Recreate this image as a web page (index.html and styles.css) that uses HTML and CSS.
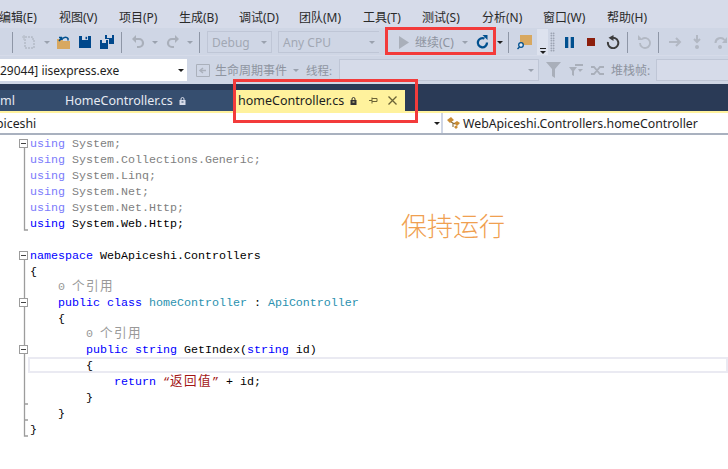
FILE: index.html
```html
<!DOCTYPE html>
<html lang="zh">
<head>
<meta charset="utf-8">
<title>homeController.cs</title>
<link rel="stylesheet" href="styles.css">
</head>
<body>
<div class="ide">
  <nav class="menubar">
    <span class="menu">编辑(E)</span><span class="menu">视图(V)</span><span class="menu">项目(P)</span><span class="menu">生成(B)</span><span class="menu">调试(D)</span><span class="menu">团队(M)</span><span class="menu m-tools">工具(T)</span><span class="menu">测试(S)</span><span class="menu">分析(N)</span><span class="menu m-win">窗口(W)</span><span class="menu">帮助(H)</span>
  </nav>

  <div class="toolbar tb1">
    <svg class="ic back" viewBox="0 0 14 14"><path d="M-6 7a5 5 0 1 0 10 0a5 5 0 1 0-10 0" fill="none" stroke="#aab0bb" stroke-width="3"/></svg>
    <i class="sep s1"></i>
    <svg class="ic newp" viewBox="0 0 15 16"><path d="M3 3h7v2h2v9H3z" fill="none" stroke="#b4bac6" stroke-width="1.5" stroke-dasharray="2 1"/><path d="M2 1v5M0 3h4" stroke="#bcc2ce" stroke-width="1.5"/></svg>
    <i class="dd gray d-new"></i>
    <svg class="ic open" viewBox="0 0 15 15"><path d="M1 4h5l1 2h7v8H1z" fill="#d8a860"/><path d="M3 6l3-3.5M6 2.500H3M6 2.500V5" stroke="#00508f" stroke-width="1.7" fill="none"/><path d="M7 3.500a3 3 0 0 1 5 0v2" stroke="#00508f" stroke-width="1.5" fill="none"/></svg>
    <svg class="ic save" viewBox="0 0 12 12"><path d="M0 0h12v12H0z" fill="#00488c"/><path d="M3 0h6v4H3z" fill="#cfd6e5"/><path d="M6.500 .8h1.600v2.400H6.500z" fill="#00488c"/></svg>
    <svg class="ic saveall" viewBox="0 0 14 14"><path d="M0 5h8v9H0z" fill="#00488c"/><path d="M2 5h4v3H2z" fill="#cfd6e5"/><path d="M5 0h9v9H9V4H5z" fill="#00488c"/><path d="M7 0h5v3H7z" fill="#cfd6e5"/></svg>
    <i class="sep s2"></i>
    <svg class="ic undo" viewBox="0 0 14 14"><path d="M2 4h6a4 4 0 0 1 0 8H6" fill="none" stroke="#a9afba" stroke-width="2.200"/><path d="M1 4l4-4v8z" fill="#a9afba"/></svg>
    <i class="dd gray d-undo"></i>
    <svg class="ic redo" viewBox="0 0 14 14"><path d="M12 4H6a4 4 0 0 0 0 8h2" fill="none" stroke="#a9afba" stroke-width="2.200"/><path d="M13 4L9 0v8z" fill="#a9afba"/></svg>
    <i class="dd gray d-redo"></i>
    <i class="sep s3"></i>
    <div class="combo debug">Debug<i class="dd gray"></i></div>
    <div class="combo cpu">Any CPU<i class="dd gray"></i></div>
    <svg class="ic play" viewBox="0 0 10 13"><path d="M0 0l10 6.500L0 13z" fill="#a9afba"/></svg>
    <span class="cont">继续(C)</span>
    <i class="dd gray d-cont"></i>
    <svg class="ic refresh" viewBox="0 0 13 14"><path d="M8.500 3.600A4.600 4.600 0 1 0 11 7.500" fill="none" stroke="#00508f" stroke-width="2.300"/><path d="M6.500 0l5 0v5z" fill="#00508f"/></svg>
    <i class="dd d-ref"></i>
    <i class="sep s4"></i>
    <svg class="ic find" viewBox="0 0 16 16"><path d="M3 1h12v10H3z" fill="#d8a860"/><circle cx="4" cy="11" r="2.300" fill="#e6ecf5" stroke="#00508f" stroke-width="1.300"/><path d="M2.500 13L.5 15" stroke="#00508f" stroke-width="1.500"/></svg>
    <div class="overflow"><i class="bar"></i><i class="dd"></i></div>
    <i class="grip"></i>
    <svg class="ic pause" viewBox="0 0 9 11"><path d="M0 0h3.300v11H0zM5.700 0H9v11H5.700z" fill="#00508f"/></svg>
    <i class="stop"></i>
    <svg class="ic restart" viewBox="0 0 14 14"><path d="M4.500 3.500A5.200 5.200 0 1 1 2 7" fill="none" stroke="#3c3c3c" stroke-width="2"/><path d="M7.500 0v6L2.500 2.700z" fill="#3c3c3c"/></svg>
    <i class="sep s5"></i>
    <svg class="ic step0" viewBox="0 0 14 14"><path d="M5 4a5 5 0 1 1-2 4" fill="none" stroke="#b2b8c3" stroke-width="1.800"/><path d="M1 0v5h5z" fill="#b2b8c3"/></svg>
    <i class="sep s6"></i>
    <svg class="ic step1" viewBox="0 0 13 10"><path d="M0 5h10M7 1l4 4-4 4" fill="none" stroke="#b2b8c3" stroke-width="2"/></svg>
    <svg class="ic step2" viewBox="0 0 8 14"><path d="M4 0v7M1 4l3 3 3-3" fill="none" stroke="#b2b8c3" stroke-width="2"/><circle cx="4" cy="12" r="2" fill="#b2b8c3"/></svg>
    <svg class="ic step3" viewBox="0 0 14 14"><path d="M1.500 8a5 5 0 0 1 9-3" fill="none" stroke="#b2b8c3" stroke-width="2"/><path d="M13 2v6H8z" fill="#b2b8c3"/><circle cx="6" cy="12" r="2" fill="#b2b8c3"/></svg>
  </div>

  <div class="toolbar tb2">
    <div class="process"><span>29044] iisexpress.exe</span><i class="dd"></i></div>
    <svg class="ic life" viewBox="0 0 14 13"><path d="M.5.500h13v12H.5z" fill="none" stroke="#aab0bb"/><path d="M7 4L4 6.500 7 9M4 6.500h6" fill="none" stroke="#aab0bb" stroke-width="1.500"/></svg>
    <span class="dim t-life">生命周期事件</span>
    <i class="dd gray d-life"></i>
    <span class="dim t-thread">线程:</span>
    <div class="combo thread"><i class="dd gray"></i></div>
    <svg class="ic fun1" viewBox="0 0 15 16"><path d="M0 0h15L9 7v9l-3-2V7z" fill="#a9afba"/></svg>
    <svg class="ic fun2" viewBox="0 0 14 13"><path d="M0 3h8L5 7v5L3 11V7zM6 0h8v2H6z" fill="#a9afba"/><path d="M9 5l5 0-3 3z" fill="#a9afba"/></svg>
    <svg class="ic swap" viewBox="0 0 14 11"><path d="M0 2h3l6 7h4M0 9h3l6-7h4" fill="none" stroke="#a9afba" stroke-width="1.800"/></svg>
    <span class="dim t-stack">堆栈帧:</span>
    <div class="combo stack"></div>
  </div>

  <div class="tabwell">
    <div class="tabs">
      <div class="tab-group">
        <span class="tab-ml">ml</span>
        <span class="tab-home">HomeController.cs</span>
        <svg class="ic lock" viewBox="0 0 7 8"><path d="M2 3V2a1.500 1.500 0 0 1 3 0v1" fill="none" stroke="#d6dbe9"/><path d="M.5 3h6v5h-6z" fill="#d6dbe9"/><path d="M2.500 5h2" stroke="#364e6f"/></svg>
      </div>
      <div class="tab-active">
        <span class="tab-name">homeController.cs</span>
        <svg class="ic lock dark" viewBox="0 0 7 8"><path d="M2 3V2a1.500 1.500 0 0 1 3 0v1" fill="none" stroke="#333"/><path d="M.5 3h6v5h-6z" fill="#333"/><path d="M2.500 5h2" stroke="#fff29d"/></svg>
        <svg class="ic pin" viewBox="0 0 9 9"><path d="M0 4.500h3M3 1.500v6M3 2.500h5v3H3" fill="none" stroke="#6b6336"/></svg>
        <svg class="ic close" viewBox="0 0 9 9"><path d="M.5.500l8 8M8.500.500l-8 8" stroke="#6b6336" stroke-width="1.300"/></svg>
      </div>
    </div>
    <div class="tabline"></div>
  </div>

  <div class="navbar">
    <div class="nav-left"><span class="nav-proj">piceshi</span><i class="dd"></i></div>
    <div class="nav-right">
      <svg class="ic classic" viewBox="0 0 14 14"><path d="M0 4l4-3 3 3-4 3zM7 7l3-2 3 2-3 3zM7 11l2-1.500 2 1.500-2 2z" fill="#c98b32"/><path d="M4 6l4 2M6 7v4" stroke="#7a5a20"/></svg>
      <span>WebApiceshi.Controllers.homeController</span>
    </div>
  </div>

  <div class="editor">
    <svg class="gutter" viewBox="0 0 28 310">
      <path d="M24.500 12v83h3.500M24.500 125v176h3.500M24.500 269h3.500M24.500 285h3.500" fill="none" stroke="#9c9c9c" stroke-width="1.300"/>
      <g fill="#fff" stroke="#9c9c9c">
        <rect x="19.500" y="4.500" width="8" height="8"/>
        <rect x="19.500" y="116.500" width="8" height="8"/>
        <rect x="19.500" y="163.500" width="8" height="8"/>
        <rect x="19.500" y="210.500" width="8" height="8"/>
      </g>
      <path d="M21 8.500h5M21 120.500h5M21 167.500h5M21 214.500h5" stroke="#444"/>
    </svg>
    <div class="code">
      <div class="ln faded"><span class="kw">using</span> System;</div>
      <div class="ln faded"><span class="kw">using</span> System.Collections.Generic;</div>
      <div class="ln faded"><span class="kw">using</span> System.Linq;</div>
      <div class="ln faded"><span class="kw">using</span> System.Net;</div>
      <div class="ln faded"><span class="kw">using</span> System.Net.Http;</div>
      <div class="ln"><span class="kw">using</span> System.Web.Http;</div>
      <div class="ln"> </div>
      <div class="ln"><span class="kw">namespace</span> WebApiceshi.Controllers</div>
      <div class="ln">{</div>
      <div class="ln lens">    0 <span class="zh">个引用</span></div>
      <div class="ln">    <span class="kw">public</span> <span class="kw">class</span> <span class="ty">homeController</span> : <span class="ty">ApiController</span></div>
      <div class="ln">    {</div>
      <div class="ln lens">        0 <span class="zh">个引用</span></div>
      <div class="ln">        <span class="kw">public</span> <span class="kw">string</span> GetIndex(<span class="kw">string</span> id)</div>
      <div class="ln current">        {</div>
      <div class="ln">            <span class="kw">return</span> <span class="str">“<span class="zh">返回值</span>”</span> + id;</div>
      <div class="ln">        }</div>
      <div class="ln">    }</div>
      <div class="ln">}</div>
    </div>
  </div>
</div>

<div class="mark mark-run"></div>
<div class="mark mark-tab"></div>
<div class="note">保持运行</div>
</body>
</html>
```

FILE: styles.css
```css
html, body { margin: 0; padding: 0; height: 100%; background: #fff; overflow: hidden; }
body { position: relative; font-family: "Noto Sans", "Noto Sans CJK SC", sans-serif; font-size: 12px; color: #1e1e1e; }
i { display: block; flex: none; }
.ide { display: flex; flex-direction: column; width: 728px; height: 469px; overflow: hidden; }

.menubar { height: 28px; flex: none; display: flex; align-items: center; background: #d6dbe9; margin-left: -11px; padding-right: 11px; padding-top: 5px; box-sizing: border-box; white-space: nowrap; font-size: 12px; color: #2a2a2a; }
.menu { width: 60px; flex: none; padding-left: 10px; box-sizing: border-box; }
.m-tools { width: 59px; margin-left: 4px; }
.m-win { margin-left: 1px; width: 64px; }

.toolbar { flex: none; height: 28px; display: flex; align-items: center; background: #cfd6e5; white-space: nowrap; position: relative; }
.tb1 { height: 27px; padding-top: 1px; box-sizing: border-box; }
.tb2 { height: 29px; border-top: 1px solid #d6dbe9; box-sizing: border-box; }
.ic { display: block; flex: none; }
.sep { width: 1px; height: 21px; background: #8e96a6; }
.dd { width: 0; height: 0; border: 3px solid transparent; border-top: 3px solid #1e1e1e; border-bottom: 0; }
.dd.gray { border-top-color: #9aa1ae; }

.back { width: 14px; height: 14px; margin-left: -9px; }
.s1 { margin-left: 7px; }
.newp { width: 15px; height: 16px; margin-left: 9px; }
.d-new { margin-left: 7px; }
.open { width: 15px; height: 15px; margin-left: 6px; }
.save { width: 12px; height: 12px; margin-left: 8px; }
.saveall { width: 14px; height: 14px; margin-left: 9px; }
.s2 { margin-left: 7px; }
.undo { width: 14px; height: 14px; margin-left: 9px; }
.d-undo { margin-left: 7px; }
.redo { width: 14px; height: 14px; margin-left: 8px; }
.d-redo { margin-left: 7px; }
.s3 { margin-left: 6px; }

.combo { box-sizing: border-box; height: 22px; border: 1px solid #bfc6d6; background: #cfd6e5; color: #a2a8b4; display: flex; align-items: center; justify-content: space-between; padding: 0 4px; flex: none; font-size: 12px; }
.debug { width: 65px; margin-left: 7px; }
.cpu { width: 101px; margin-left: 6px; border-right: 0; }
.play { width: 10px; height: 13px; margin-left: 20px; }
.cont { margin-left: 6px; color: #8e94a0; font-size: 12px; width: 40px; }
.d-cont { margin-left: 7px; }
.refresh { width: 13px; height: 14px; margin-left: 8px; }
.d-ref { margin-left: 8px; }
.s4 { margin-left: 5px; }
.find { width: 16px; height: 16px; margin-left: 8px; }
.overflow { width: 11px; height: 26px; margin-left: 4px; background: #dde2ee; display: flex; flex-direction: column; align-items: center; justify-content: flex-end; padding-bottom: 1px; box-sizing: border-box; flex: none; }
.overflow .bar { width: 6px; height: 1px; background: #1e1e1e; margin-bottom: 2px; }
.grip { width: 5px; height: 20px; margin-left: 2px; background-image: radial-gradient(#7f8796 .7px, transparent .9px); background-size: 2.500px 2.500px; }
.pause { width: 9px; height: 11px; margin-left: 10px; }
.stop { width: 8px; height: 8px; margin-left: 13px; background: #8c1e0c; }
.restart { width: 14px; height: 14px; margin-left: 11px; }
.s5 { margin-left: 7px; }
.step0 { width: 14px; height: 14px; margin-left: 9px; }
.s6 { margin-left: 7px; }
.step1 { width: 13px; height: 10px; margin-left: 10px; }
.step2 { width: 8px; height: 14px; margin-left: 11px; }
.step3 { width: 14px; height: 14px; margin-left: 13px; }

.process { width: 187px; height: 22px; background: #fff; flex: none; display: flex; align-items: center; justify-content: space-between; padding-right: 3px; box-sizing: border-box; font-size: 12px; color: #1e1e1e; }
.life { width: 14px; height: 13px; margin-left: 9px; }
.dim { color: #8e94a0; flex: none; }
.t-life { margin-left: 5px; width: 72px; }
.d-life { margin-left: 6px; }
.t-thread { margin-left: 7px; width: 27px; font-size: 11.5px; }
.thread { width: 200px; margin-left: 6px; justify-content: flex-end; background: #d6dbe9; }
.fun1 { width: 15px; height: 16px; margin-left: 7px; }
.fun2 { width: 14px; height: 13px; margin-left: 8px; }
.swap { width: 14px; height: 11px; margin-left: 8px; }
.t-stack { margin-left: 6px; width: 39px; font-size: 12px; }
.stack { width: 74px; margin-left: 6px; background: #d6dbe9; border-right: 0; }

.tabwell { flex: none; background: #2a3a56; padding-top: 6px; }
.tabs { height: 21px; display: flex; align-items: stretch; font-size: 12.5px; }
.tab-group { width: 234px; background: #364e6f; color: #e6eaf2; display: flex; align-items: center; box-sizing: border-box; flex: none; }
.tab-ml { width: 65px; flex: none; }
.tab-home { width: 113px; flex: none; }
.lock { width: 7px; height: 8px; margin-left: 1px; }
.tab-active { width: 171px; background: #fff29d; display: flex; align-items: center; color: #1e1e1e; box-sizing: border-box; padding-left: 4px; flex: none; }
.tab-name { width: 112px; flex: none; }
.lock.dark { margin-left: 0; }
.pin { width: 9px; height: 9px; margin-left: 12px; }
.close { width: 9px; height: 9px; margin-left: 10px; }
.tabline { height: 2px; background: #fff29d; }

.navbar { flex: none; height: 22px; display: flex; background: #fff; border-bottom: 2px solid #a9b1bf; box-sizing: border-box; font-size: 12.3px; }
.nav-left { width: 441px; display: flex; align-items: center; justify-content: space-between; padding-right: 1px; box-sizing: border-box; flex: none; }
.nav-proj { margin-left: -4px; }
.nav-right { flex: 1; display: flex; align-items: center; border-left: 2px solid #cfd6e5; padding-left: 4px; white-space: nowrap; }
.classic { width: 14px; height: 14px; margin-right: 2px; }

.editor { flex: 1; display: flex; align-items: flex-start; background: #fff; }
.gutter { width: 28px; height: 310px; flex: none; }
.code { flex: 1; font-family: "Liberation Mono", "Noto Sans CJK SC", monospace; font-size: 11.67px; color: #000; min-width: 0; }
.ln { height: 16px; line-height: 16px; padding: 1px 0 0 2px; white-space: pre; box-sizing: border-box; }
.lens { height: 15px; line-height: 15px; color: #999; }
.current { box-shadow: inset 0 0 0 2px #eaeaf2; }
.kw { color: #0000ff; }
.ty { color: #2b91af; }
.str { color: #a31515; }
.zh { font-size: 12.6px; letter-spacing: 1.400px; }
.faded { color: #808080; }
.faded .kw { color: #7b7bfb; }

.mark { position: absolute; border: 3px solid #f33b3b; box-sizing: border-box; }
.mark-run { left: 385px; top: 27px; width: 111px; height: 28px; }
.mark-tab { left: 233px; top: 79px; width: 185px; height: 44px; }
.note { position: absolute; left: 401px; top: 207px; font-size: 26px; line-height: 38px; font-weight: 300; color: #f0a050; white-space: nowrap; }
```
